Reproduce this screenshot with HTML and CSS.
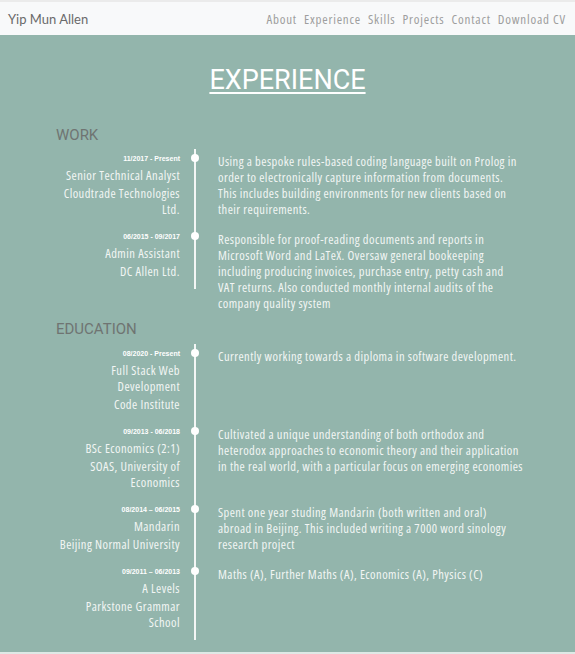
FILE: index.html
```html
<!DOCTYPE html>
<html lang="en">
<head>
<meta charset="utf-8">
<title>Yip Mun Allen</title>
<link rel="stylesheet" href="styles.css">
</head>
<body>
<nav class="navbar">
  <span class="brand">Yip Mun Allen</span>
  <ul class="links">
    <li>About</li>
    <li>Experience</li>
    <li>Skills</li>
    <li>Projects</li>
    <li>Contact</li>
    <li>Download CV</li>
  </ul>
</nav>
<section class="experience">
  <h2 class="title">EXPERIENCE</h2>
  <div class="container">
    <h3 class="group-title">WORK</h3>
    <div class="timeline">
      <div class="item">
        <div class="rail">
          <div class="meta">
            <div class="date">11/2017 - Present</div>
            <div class="role">Senior Technical Analyst</div>
            <div class="org">Cloudtrade Technologies Ltd.</div>
          </div>
          <div class="axis"><span class="dot"></span></div>
        </div>
        <p class="desc">Using a bespoke rules-based coding language built on Prolog in order to electronically capture information from documents. This includes building environments for new clients based on their requirements.</p>
      </div>
      <div class="item">
        <div class="rail">
          <div class="meta">
            <div class="date">06/2015 - 09/2017</div>
            <div class="role">Admin Assistant</div>
            <div class="org">DC Allen Ltd.</div>
          </div>
          <div class="axis"><span class="dot"></span></div>
        </div>
        <p class="desc">Responsible for proof-reading documents and reports in Microsoft Word and LaTeX. Oversaw general bookeeping including producing invoices, purchase entry, petty cash and VAT returns. Also conducted monthly internal audits of the company quality system</p>
      </div>
    </div>
    <h3 class="group-title">EDUCATION</h3>
    <div class="timeline">
      <div class="item">
        <div class="rail">
          <div class="meta">
            <div class="date">08/2020 - Present</div>
            <div class="role">Full Stack Web Development</div>
            <div class="org">Code Institute</div>
          </div>
          <div class="axis"><span class="dot"></span></div>
        </div>
        <p class="desc">Currently working towards a diploma in software development.</p>
      </div>
      <div class="item">
        <div class="rail">
          <div class="meta">
            <div class="date">09/2013 - 06/2018</div>
            <div class="role">BSc Economics (2:1)</div>
            <div class="org">SOAS, University of Economics</div>
          </div>
          <div class="axis"><span class="dot"></span></div>
        </div>
        <p class="desc">Cultivated a unique understanding of both orthodox and heterodox approaches to economic theory and their application in the real world, with a particular focus on emerging economies</p>
      </div>
      <div class="item">
        <div class="rail">
          <div class="meta">
            <div class="date">08/2014 – 06/2015</div>
            <div class="role">Mandarin</div>
            <div class="org">Beijing Normal University</div>
          </div>
          <div class="axis"><span class="dot"></span></div>
        </div>
        <p class="desc">Spent one year studing Mandarin (both written and oral) abroad in Beijing. This included writing a 7000 word sinology research project</p>
      </div>
      <div class="item">
        <div class="rail">
          <div class="meta">
            <div class="date">09/2011 – 06/2013</div>
            <div class="role">A Levels</div>
            <div class="org">Parkstone Grammar School</div>
          </div>
          <div class="axis"><span class="dot"></span></div>
        </div>
        <p class="desc">Maths (A), Further Maths (A), Economics (A), Physics (C)</p>
      </div>
    </div>
  </div>
</section>
<div class="bottom-strip"></div>
</body>
</html>
```
FILE: styles.css
```css
html, body {
  margin: 0;
  padding: 0;
  background: #ffffff;
}

body {
  font-family: "Open Sans", "Noto Sans", sans-serif;
}

.navbar {
  display: flex;
  align-items: center;
  justify-content: space-between;
  height: 33px;
  border-top: 2px solid #ebebeb;
  background: #f8f9fa;
  padding: 0 9px 0 8px;
}

.brand {
  font-family: Lato, sans-serif;
  font-size: 13px;
  color: #6a6a6a;
}

.links {
  display: flex;
  gap: 7px;
  list-style: none;
  margin: 0;
  padding: 0;
  font-family: "Open Sans", sans-serif;
  font-stretch: 75%;
  font-size: 13px;
  letter-spacing: 0.8px;
  color: #9e9e9e;
}

.experience {
  background: #93b5ac;
  padding: 29px 0 12px;
}

.title {
  margin: 0;
  text-align: center;
  font-family: Roboto, sans-serif;
  font-weight: 400;
  font-size: 27px;
  line-height: 32px;
  color: #ffffff;
  text-decoration: underline;
  text-decoration-thickness: 2px;
  text-underline-offset: 3px;
}

.container {
  margin-left: 56px;
  width: 470px;
}

.group-title {
  margin: 30px 0 5px;
  font-family: Roboto, sans-serif;
  font-weight: 400;
  font-size: 15px;
  line-height: 18px;
  color: #6f7472;
}

.timeline + .group-title {
  margin: 8px 0 6px;
}

.item {
  display: flex;
  align-items: flex-start;
  font-family: "Open Sans", sans-serif;
  font-stretch: 75%;
  letter-spacing: 0.45px;
  color: #f2f5f4;
}

.rail {
  display: flex;
  flex: none;
}

.meta {
  width: 124px;
  padding: 4px 0 9px;
  text-align: right;
}

.date {
  font-family: "Liberation Sans", Arial, sans-serif;
  font-size: 7px;
  font-weight: 700;
  line-height: 12px;
  letter-spacing: 0;
  color: #ffffff;
}

.role,
.org {
  font-size: 12.5px;
  line-height: 16px;
}

.role {
  margin-top: 3px;
}

.org {
  margin-top: 2px;
}

.axis {
  width: 30px;
  flex: none;
  display: flex;
  justify-content: center;
  align-items: flex-start;
  background: linear-gradient(#f3f6f5, #f3f6f5) center / 2px 100% no-repeat;
}

.dot {
  width: 8px;
  height: 8px;
  margin-top: 5px;
  border-radius: 50%;
  background: #ffffff;
}

.desc {
  margin: 0;
  padding: 5px 0 0 8px;
  width: 305px;
  font-size: 12.5px;
  line-height: 16px;
}

.bottom-strip {
  height: 3px;
  background: #dfe9e6;
}
```
